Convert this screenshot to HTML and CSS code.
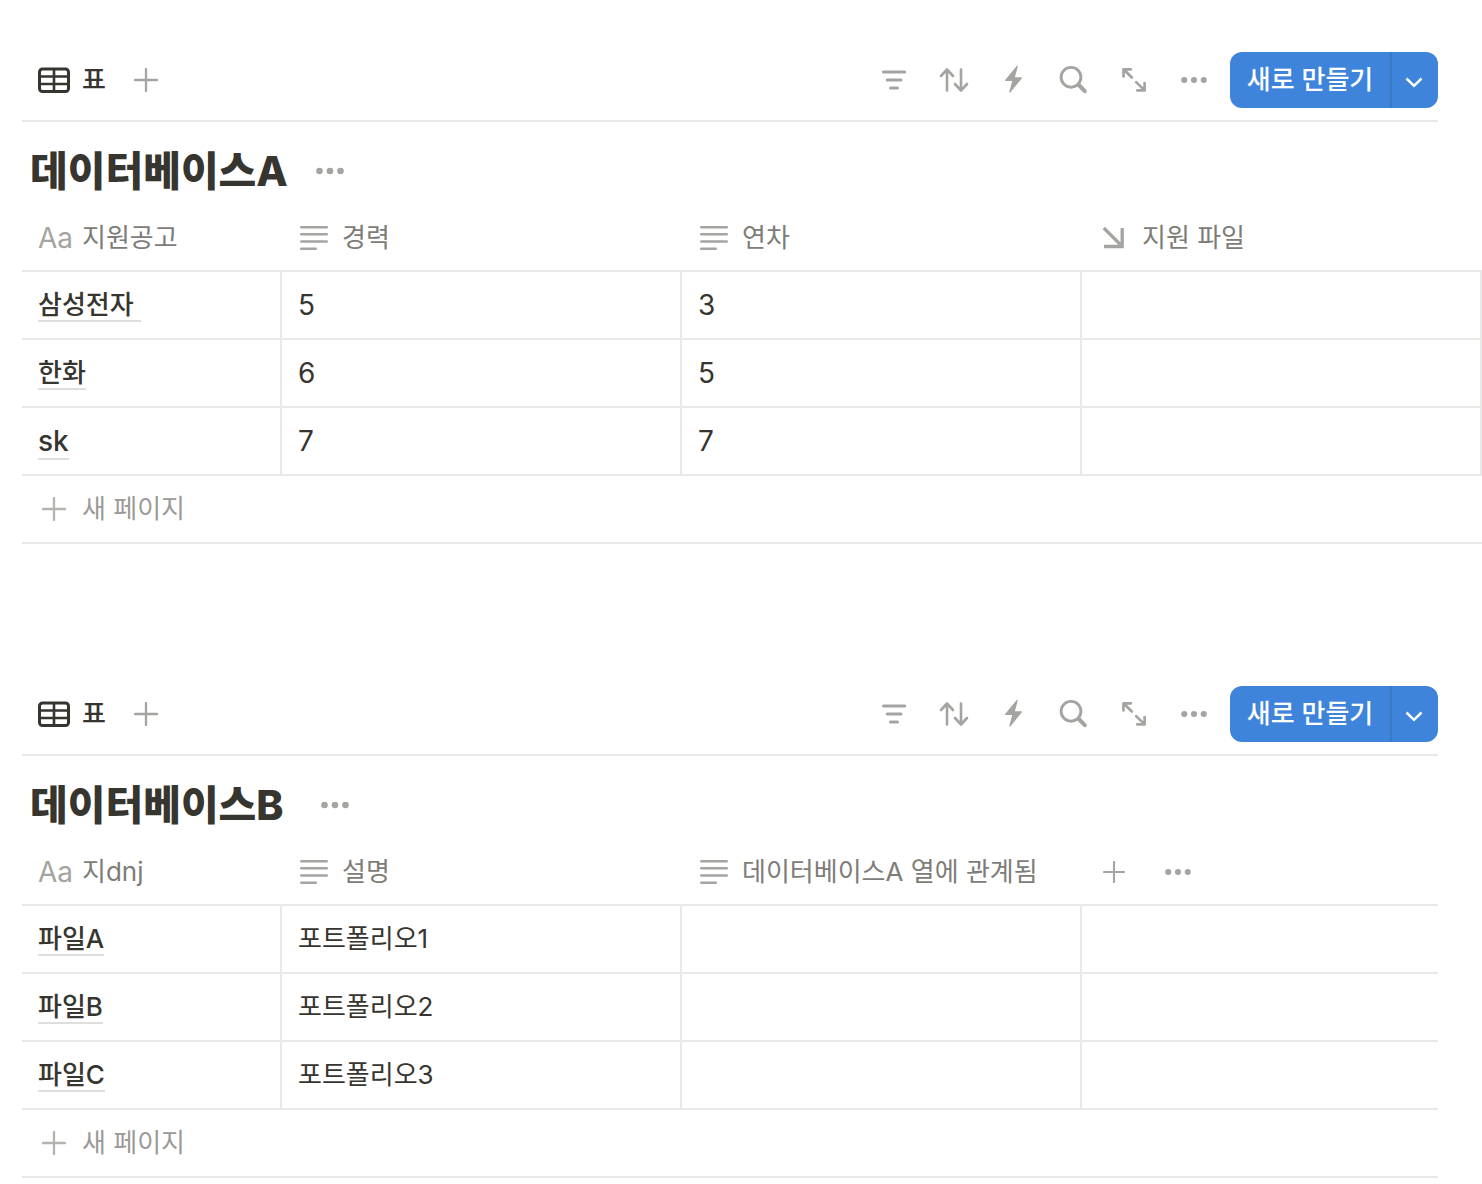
FILE: index.html
```html
<!DOCTYPE html>
<html lang="ko">
<head>
<meta charset="utf-8">
<meta name="viewport" content="width=device-width, initial-scale=1">
<title>데이터베이스</title>
<link rel="stylesheet" href="styles.css">
</head>
<body>
<svg class="sprite" width="0" height="0" aria-hidden="true">
  <symbol id="i-table" viewBox="0 0 32 26"><g fill="none" stroke="currentColor" stroke-width="3"><rect x="1.500" y="2" width="29" height="22.500" rx="3"/><path d="M2 9.500h28M2 17h28M16 2v22" stroke-width="2.600"/></g></symbol>
  <symbol id="i-plus" viewBox="0 0 24 24"><path d="M12 1v22M1 12h22" fill="none" stroke="currentColor" stroke-width="2.300" stroke-linecap="round"/></symbol>
  <symbol id="i-filter" viewBox="0 0 32 32"><path d="M5.500 8h21.200M9.200 16h13.800M12.500 24h7" fill="none" stroke="currentColor" stroke-width="3" stroke-linecap="round"/></symbol>
  <symbol id="i-sort" viewBox="0 0 32 32"><path d="M9 26.500V6M3 12l6-6.500 6 6.500M23 5.500V26M17 20l6 6.500 6-6.500" fill="none" stroke="currentColor" stroke-width="2.600" stroke-linecap="round" stroke-linejoin="round"/></symbol>
  <symbol id="i-bolt" viewBox="0 0 32 32"><path d="M18.500 2.200 7.300 15.800c-.5.600-.2 1.200.5 1.200h6.400L11.300 27.800c-.2 1 .6 1.300 1.200.5L23.700 14.500c.5-.7.200-1.200-.5-1.200h-6.300L19.700 2.800c.2-.9-.6-1.300-1.200-.6Z" fill="currentColor"/></symbol>
  <symbol id="i-search" viewBox="0 0 32 32"><g fill="none" stroke="currentColor"><circle cx="13" cy="13.300" r="9.900" stroke-width="2.900"/><path d="m20.800 21 6 6.200" stroke-width="4" stroke-linecap="round"/></g></symbol>
  <symbol id="i-expand" viewBox="0 0 32 32"><path d="m13.800 13.500-8-8M5.500 12.500V5.300h7.400M18.200 18.100l8.200 8M26.600 19v7.400h-7.300" fill="none" stroke="currentColor" stroke-width="2.700" stroke-linecap="round" stroke-linejoin="round"/></symbol>
  <symbol id="i-dots" viewBox="0 0 28 8"><g fill="currentColor"><circle cx="3.500" cy="4" r="3.300"/><circle cx="14" cy="4" r="3.300"/><circle cx="24.500" cy="4" r="3.300"/></g></symbol>
  <symbol id="i-chevron" viewBox="0 0 20 12"><path d="m2.500 2.500 7.500 7.300 7.500-7.300" fill="none" stroke="currentColor" stroke-width="2.500"/></symbol>
  <symbol id="i-lines" viewBox="0 0 28 24"><path d="M1.200 1.200h25.600M1.200 8.300h25.600M1.200 15.500h25.600M1.200 22.700h14.600" fill="none" stroke="currentColor" stroke-width="2.400" stroke-linecap="round"/></symbol>
  <symbol id="i-relation" viewBox="0 0 24 24"><path d="m1.800 2 16.500 16.500M2 20.500h18.200V2" fill="none" stroke="currentColor" stroke-width="3.300"/></symbol>
</svg>

<main class="page">
  <section class="database">
    <header class="toolbar">
      <button class="tab" type="button"><svg class="icon-table"><use href="#i-table"/></svg>표</button>
      <button class="add-view" type="button" aria-label="보기 추가"><svg class="icon-plus"><use href="#i-plus"/></svg></button>
      <div class="tools">
        <button class="tool" type="button" aria-label="필터"><svg class="icon"><use href="#i-filter"/></svg></button>
        <button class="tool" type="button" aria-label="정렬"><svg class="icon"><use href="#i-sort"/></svg></button>
        <button class="tool" type="button" aria-label="자동화"><svg class="icon"><use href="#i-bolt"/></svg></button>
        <button class="tool" type="button" aria-label="검색"><svg class="icon"><use href="#i-search"/></svg></button>
        <button class="tool" type="button" aria-label="전체 화면"><svg class="icon"><use href="#i-expand"/></svg></button>
        <button class="tool" type="button" aria-label="더 보기"><svg class="icon-dots"><use href="#i-dots"/></svg></button>
      </div>
      <div class="create">
        <button class="create-main" type="button">새로 만들기</button>
        <button class="create-menu" type="button" aria-label="만들기 옵션"><svg class="icon-chevron"><use href="#i-chevron"/></svg></button>
      </div>
    </header>
    <div class="heading">
      <h2 class="title">데이터베이스A</h2>
      <button class="title-menu" type="button" aria-label="데이터베이스 메뉴"><svg class="icon-dots-large"><use href="#i-dots"/></svg></button>
    </div>
    <table class="grid">
      <colgroup><col class="col-name"><col class="col-text"><col class="col-text"><col></colgroup>
      <thead>
        <tr>
          <th scope="col"><div class="field"><span class="aa" aria-hidden="true">Aa</span>지원공고</div></th>
          <th scope="col"><div class="field"><svg class="icon-lines"><use href="#i-lines"/></svg>경력</div></th>
          <th scope="col"><div class="field"><svg class="icon-lines"><use href="#i-lines"/></svg>연차</div></th>
          <th scope="col"><div class="field"><svg class="icon-relation"><use href="#i-relation"/></svg>지원 파일</div></th>
        </tr>
      </thead>
      <tbody>
        <tr><td><a class="record" href="#">삼성전자&nbsp;</a></td><td class="latin">5</td><td class="latin">3</td><td></td></tr>
        <tr><td><a class="record" href="#">한화</a></td><td class="latin">6</td><td class="latin">5</td><td></td></tr>
        <tr><td class="latin"><a class="record" href="#">sk</a></td><td class="latin">7</td><td class="latin">7</td><td></td></tr>
      </tbody>
    </table>
    <button class="new-page" type="button"><svg class="icon-plus"><use href="#i-plus"/></svg>새 페이지</button>
  </section>

  <section class="database fitted">
    <header class="toolbar">
      <button class="tab" type="button"><svg class="icon-table"><use href="#i-table"/></svg>표</button>
      <button class="add-view" type="button" aria-label="보기 추가"><svg class="icon-plus"><use href="#i-plus"/></svg></button>
      <div class="tools">
        <button class="tool" type="button" aria-label="필터"><svg class="icon"><use href="#i-filter"/></svg></button>
        <button class="tool" type="button" aria-label="정렬"><svg class="icon"><use href="#i-sort"/></svg></button>
        <button class="tool" type="button" aria-label="자동화"><svg class="icon"><use href="#i-bolt"/></svg></button>
        <button class="tool" type="button" aria-label="검색"><svg class="icon"><use href="#i-search"/></svg></button>
        <button class="tool" type="button" aria-label="전체 화면"><svg class="icon"><use href="#i-expand"/></svg></button>
        <button class="tool" type="button" aria-label="더 보기"><svg class="icon-dots"><use href="#i-dots"/></svg></button>
      </div>
      <div class="create">
        <button class="create-main" type="button">새로 만들기</button>
        <button class="create-menu" type="button" aria-label="만들기 옵션"><svg class="icon-chevron"><use href="#i-chevron"/></svg></button>
      </div>
    </header>
    <div class="heading">
      <h2 class="title">데이터베이스B&nbsp;</h2>
      <button class="title-menu" type="button" aria-label="데이터베이스 메뉴"><svg class="icon-dots-large"><use href="#i-dots"/></svg></button>
    </div>
    <table class="grid">
      <colgroup><col class="col-name"><col class="col-text"><col class="col-text"><col></colgroup>
      <thead>
        <tr>
          <th scope="col"><div class="field"><span class="aa" aria-hidden="true">Aa</span>지dnj</div></th>
          <th scope="col"><div class="field"><svg class="icon-lines"><use href="#i-lines"/></svg>설명</div></th>
          <th scope="col"><div class="field"><svg class="icon-lines"><use href="#i-lines"/></svg>데이터베이스A 열에 관계됨</div></th>
          <th scope="col"><div class="actions">
            <button type="button" aria-label="속성 추가"><svg class="icon-plus-small"><use href="#i-plus"/></svg></button>
            <button type="button" aria-label="속성 메뉴"><svg class="icon-dots"><use href="#i-dots"/></svg></button>
          </div></th>
        </tr>
      </thead>
      <tbody>
        <tr><td><a class="record" href="#">파일A</a></td><td>포트폴리오1</td><td></td><td></td></tr>
        <tr><td><a class="record" href="#">파일B</a></td><td>포트폴리오2</td><td></td><td></td></tr>
        <tr><td><a class="record" href="#">파일C</a></td><td>포트폴리오3</td><td></td><td></td></tr>
      </tbody>
    </table>
    <button class="new-page" type="button"><svg class="icon-plus"><use href="#i-plus"/></svg>새 페이지</button>
  </section>
</main>
</body>
</html>
```

FILE: styles.css
```css
:root {
  --ink: #37352f;
  --label: #7d7c78;
  --muted: #a5a4a1;
  --line: #e9e9e8;
  --blue: #3f84db;
}

* {
  box-sizing: border-box;
}

body {
  margin: 0;
  background: #fff;
  color: var(--ink);
  font-family: Inter, "Noto Sans CJK KR", sans-serif;
  font-size: 26px;
  line-height: 36px;
}

button {
  margin: 0;
  padding: 0;
  border: 0;
  background: none;
  color: inherit;
  font: inherit;
  cursor: pointer;
}

svg {
  display: block;
  flex: none;
}

.sprite {
  position: absolute;
}

.page {
  display: flex;
  flex-direction: column;
  gap: 50px;
  padding-left: 22px;
}

.database {
  padding-top: 40px;
}

.database + .database {
  padding-top: 80px;
}

.fitted {
  margin-right: 44px;
}

.toolbar {
  display: flex;
  align-items: center;
  height: 82px;
  margin-right: 44px;
  border-bottom: 2px solid var(--line);
}

.fitted .toolbar {
  margin-right: 0;
}

.tab {
  display: flex;
  align-items: center;
  gap: 12px;
  padding-left: 16px;
  font-weight: 500;
}

.add-view {
  padding: 0 12px;
  margin-left: 16px;
  color: var(--muted);
}

.tools {
  display: flex;
  margin-left: auto;
  color: var(--muted);
}

.tool {
  display: grid;
  place-items: center;
  width: 60px;
  height: 56px;
}

.create {
  display: flex;
  height: 56px;
  margin-left: 6px;
  border-radius: 12px;
  overflow: hidden;
  background: var(--blue);
  color: #fff;
}

.create-main {
  width: 160px;
  font-weight: 500;
}

.create-menu {
  display: grid;
  place-items: center;
  width: 48px;
  padding: 4px 2px 0 0;
  border-left: 2px solid #3b78c6;
}

.heading {
  display: flex;
  align-items: center;
  gap: 28px;
  height: 82px;
  padding: 16px 0 0 8px;
}

.title {
  margin: 0;
  font-size: 41px;
  line-height: 56px;
  font-weight: 800;
}

.title-menu {
  color: var(--muted);
}

.grid {
  width: 100%;
  table-layout: fixed;
  border-collapse: separate;
  border-spacing: 0;
}

.col-name {
  width: 260px;
}

.col-text {
  width: 400px;
}

th,
td {
  height: 68px;
  padding: 0 16px;
  border-bottom: 2px solid var(--line);
  text-align: left;
  white-space: nowrap;
}

th {
  padding-top: 2px;
  color: var(--label);
  font-weight: 400;
}

td {
  border-right: 2px solid var(--line);
}

.fitted td:last-child {
  border-right: 0;
}

.field {
  display: flex;
  align-items: center;
  gap: 12px;
}

.field svg,
.aa {
  color: var(--muted);
}

.aa {
  width: 32px;
  font-size: 28px;
}

.latin {
  font-size: 28px;
}

.record {
  color: inherit;
  font-weight: 500;
  text-decoration: none;
  border-bottom: 2px solid #dededc;
}

.actions {
  display: flex;
  align-items: center;
  gap: 40px;
  padding-left: 5px;
  color: var(--muted);
}

.new-page {
  display: flex;
  align-items: center;
  gap: 16px;
  width: 100%;
  height: 68px;
  padding-left: 20px;
  border-bottom: 2px solid var(--line);
  color: #9b9a97;
}

.new-page svg {
  color: #b4b3b0;
}

.icon-table {
  width: 32px;
  height: 26px;
}

.icon-plus {
  width: 24px;
  height: 24px;
}

.icon-plus-small {
  width: 22px;
  height: 22px;
}

.icon {
  width: 32px;
  height: 32px;
}

.icon-dots {
  width: 26px;
  height: 8px;
}

.icon-dots-large {
  width: 28px;
  height: 8px;
}

.icon-chevron {
  width: 20px;
  height: 12px;
}

.icon-lines {
  width: 28px;
  height: 24px;
  margin: 0 2px;
}

.icon-relation {
  width: 24px;
  height: 24px;
  margin: 0 4px;
}
```
